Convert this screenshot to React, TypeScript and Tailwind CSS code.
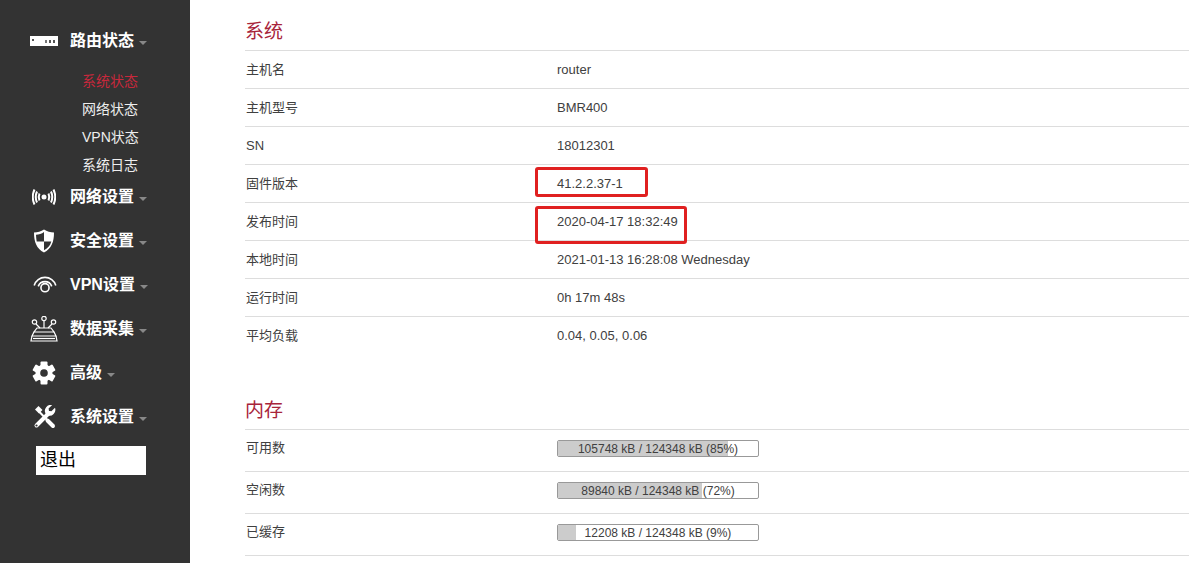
import type { ReactNode } from 'react';

const font = "font-['Liberation_Sans','Noto_Sans_CJK_SC',sans-serif]";

function RouterIcon() {
    return (
        <svg width="28" height="10" viewBox="0 0 28 10">
            <rect width="28" height="10" fill="#fff" />
            <rect x="2" y="3" width="2" height="2" fill="#555" />
            <rect x="15" y="4" width="2" height="3" fill="#777" />
            <rect x="19" y="4" width="2" height="3" fill="#555" />
            <rect x="23" y="4" width="2" height="3" fill="#555" />
        </svg>
    );
}

function SignalIcon() {
    return (
        <svg className="ml-0.5" width="24" height="18" viewBox="0 0 24 18" fill="none" stroke="#fff" strokeWidth="2">
            <circle cx="12" cy="9" r="2.500" fill="#fff" stroke="none" />
            <path d="M7.500 5.500q-1.500 3.500 0 7M16.500 5.500q1.500 3.500 0 7" />
            <path d="M5 3.500q-2.500 5.500 0 11M19 3.500q2.500 5.500 0 11" />
            <path d="M2.500 1.500q-3.500 7.500 0 15M21.500 1.500q3.500 7.500 0 15" />
        </svg>
    );
}

function ShieldIcon() {
    return (
        <svg className="ml-[3px]" width="22" height="24" viewBox="0 0 22 24">
            <path d="M11 0.500C8 2.500 4.500 3.500 1 3.500c0 9.500 2.500 16 10 20 7.500-4 10-10.500 10-20-3.500 0-7-1-10-3z" fill="#fff" />
            <path d="M11 3v9.500H3.700C3.300 10.500 3.100 8.300 3 5.800 5.800 5.600 8.700 4.700 11 3z" fill="#333" />
            <path d="M11 12.500h7.300c-1 3.800-3.300 6.800-7.300 8.800z" fill="#333" />
        </svg>
    );
}

function WifiIcon() {
    return (
        <svg className="ml-[3px]" width="24" height="18" viewBox="0 0 26 20" fill="none" stroke="#fff" strokeWidth="1.800">
            <circle cx="13" cy="13" r="4.500" />
            <path d="M5.500 11.500a8 8 0 0 1 15 0" />
            <path d="M1 10.500a12.500 12.500 0 0 1 24 0" />
        </svg>
    );
}

function CollectIcon() {
    return (
        <svg width="28" height="26" viewBox="0 0 28 26" fill="none" stroke="#fff" strokeWidth="1.200">
            <circle cx="4.500" cy="6" r="2.200" />
            <circle cx="14" cy="2.500" r="2.200" />
            <circle cx="23.500" cy="6" r="2.200" />
            <path d="M6 8l4 4M14 5v7M22 8l-4 4" />
            <path d="M7 12h14l3 4H4z" />
            <path d="M4 16l-2 4h24l-2-4" />
            <path d="M2 20l-1 5h26l-1-5" />
            <path d="M3 22.500h22" />
        </svg>
    );
}

function GearIcon() {
    return (
        <svg className="ml-[2px]" width="24" height="24" viewBox="0 0 24 24">
            <g fill="#fff">
                <circle cx="12" cy="12" r="8.500" />
                <rect x="8.500" y="0.500" width="7" height="23" rx="1" />
                <rect x="8.500" y="0.500" width="7" height="23" rx="1" transform="rotate(60 12 12)" />
                <rect x="8.500" y="0.500" width="7" height="23" rx="1" transform="rotate(120 12 12)" />
            </g>
            <circle cx="12" cy="12" r="3.800" fill="#333" />
        </svg>
    );
}

function ToolsIcon() {
    return (
        <svg className="ml-[2px]" width="24" height="24" viewBox="0 0 24 24" fill="none" stroke="#fff">
            <path d="M3 4.500L6.500 1l4 4-3.500 3.500z" fill="#fff" stroke="none" />
            <path d="M7 6.500l14 14.500" strokeWidth="2" />
            <path d="M15.500 15.500l5.500 5.500" strokeWidth="4" strokeLinecap="round" />
            <path d="M17 8L4.500 20.500" strokeWidth="4" strokeLinecap="round" />
            <path d="M23 2.800l-3.600 3.500-2.400-.4-.4-2.400L20.200 0A6 6 0 0 0 13.500 8.500l2 2A6 6 0 0 0 23 2.800z" fill="#fff" stroke="none" />
            <circle cx="4.500" cy="20.500" r="1.100" fill="#333" stroke="none" />
        </svg>
    );
}

function NavItem({ icon, label, className = '' }: { icon: ReactNode; label: string; className?: string }) {
    return (
        <div className={`flex items-center h-11 ${className}`}>
            <div className="w-[70px] pl-[30px] flex items-center shrink-0">{icon}</div>
            <span className="text-white font-bold text-base leading-none">{label}</span>
            <span className="ml-[5px] mt-[3px] border-x-4 border-x-transparent border-t-4 border-t-[#888]" />
        </div>
    );
}

function SubItem({ label, active }: { label: string; active?: boolean }) {
    return (
        <div className={`h-7 pl-[82px] flex items-center text-sm ${active ? 'text-[#c7283c]' : 'text-[#eee]'}`}>
            {label}
        </div>
    );
}

function Row({ label, value, tall }: { label: string; value: ReactNode; tall?: boolean }) {
    return (
        <div className={`flex items-center border-t border-[#ddd] text-[#404040] text-[13px] ${tall ? 'h-[42px] pb-1' : 'h-[38px]'}`}>
            <div className={`w-[312px] pl-px shrink-0 ${tall ? '-mt-px' : ''}`}>{label}</div>
            <div>{value}</div>
        </div>
    );
}

function Progress({ text, percent }: { text: string; percent: number }) {
    return (
        <div className="relative w-[202px] h-[17px] border border-[#999] rounded-[2px] bg-white overflow-hidden">
            <div className="h-full bg-[#ccc]" style={{ width: `${percent}%` }} />
            <div className="absolute inset-0 flex items-center justify-center text-xs text-[#404040]">{text}</div>
        </div>
    );
}

export default function App() {
    return (
        <div className={`relative w-[1190px] h-[563px] overflow-hidden flex bg-white ${font}`}>
            <aside className="w-[190px] shrink-0 bg-[#333] pt-[19px]">
                <NavItem icon={<RouterIcon />} label="路由状态" className="mb-1" />
                <SubItem label="系统状态" active />
                <SubItem label="网络状态" />
                <SubItem label="VPN状态" />
                <SubItem label="系统日志" />
                <NavItem icon={<SignalIcon />} label="网络设置" className="-mt-1" />
                <NavItem icon={<ShieldIcon />} label="安全设置" />
                <NavItem icon={<WifiIcon />} label="VPN设置" />
                <NavItem icon={<CollectIcon />} label="数据采集" />
                <NavItem icon={<GearIcon />} label="高级" />
                <NavItem icon={<ToolsIcon />} label="系统设置" />
                <div className="ml-9 mt-[7px] w-[110px] h-[29px] bg-white text-black text-lg leading-[29px] pl-1">退出</div>
            </aside>
            <main className="w-[944px] ml-[55px] shrink-0">
                <h2 className="h-[50px] pt-[19px] text-[#a8243a] text-[19px] leading-[26px]">系统</h2>
                <Row label="主机名" value="router" />
                <Row label="主机型号" value="BMR400" />
                <Row label="SN" value="18012301" />
                <Row label="固件版本" value="41.2.2.37-1" />
                <Row label="发布时间" value="2020-04-17 18:32:49" />
                <Row label="本地时间" value="2021-01-13 16:28:08 Wednesday" />
                <Row label="运行时间" value="0h 17m 48s" />
                <Row label="平均负载" value="0.04, 0.05, 0.06" />
                <h2 className="h-[75px] pt-11 text-[#a8243a] text-[19px] leading-[26px]">内存</h2>
                <Row tall label="可用数" value={<Progress text="105748 kB / 124348 kB (85%)" percent={85} />} />
                <Row tall label="空闲数" value={<Progress text="89840 kB / 124348 kB (72%)" percent={72} />} />
                <div className="border-b border-[#ddd]">
                    <Row tall label="已缓存" value={<Progress text="12208 kB / 124348 kB (9%)" percent={9} />} />
                </div>
            </main>
            {/* red marks drawn over the screenshot */}
            <div className="absolute left-[535px] top-[167px] w-[113px] h-[30px] border-[3px] border-[#e02020] rounded-[3px]" />
            <div className="absolute left-[535px] top-[206px] w-[152px] h-[38px] border-[3px] border-[#e02020] rounded-[3px]" />
        </div>
    );
}
